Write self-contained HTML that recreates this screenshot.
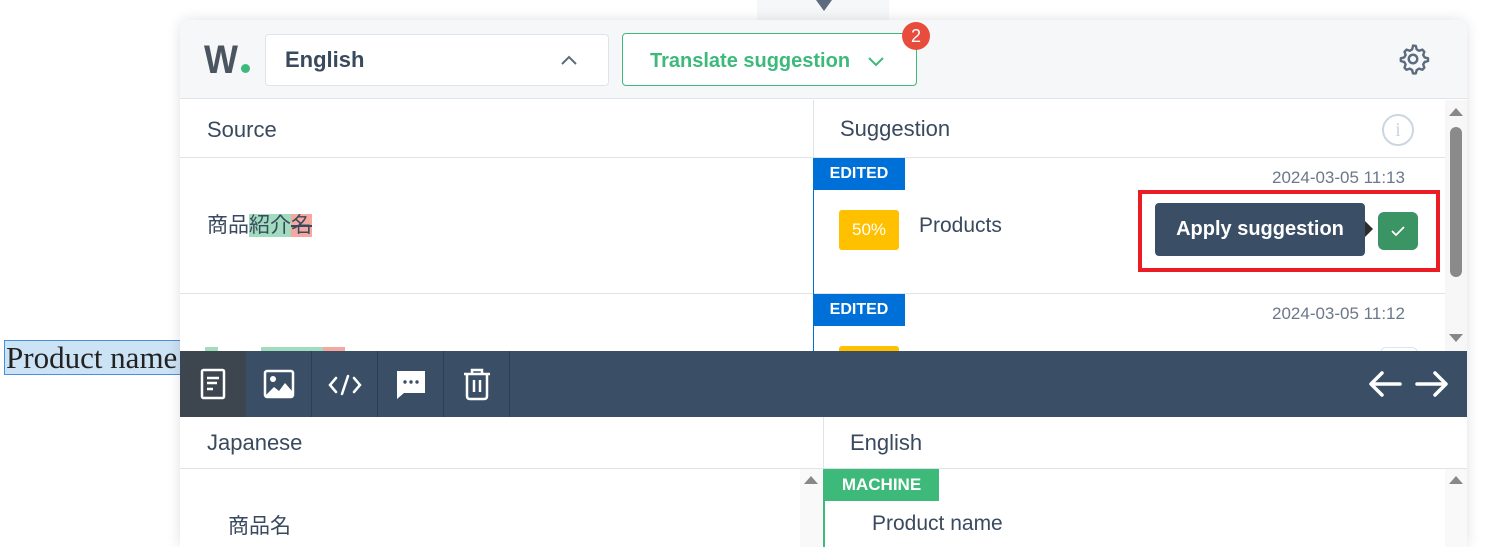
<!DOCTYPE html>
<html><head><meta charset="utf-8"><style>
*{box-sizing:border-box;margin:0;padding:0}
html,body{width:1492px;height:547px;overflow:hidden}
body{background:#fff;position:relative;font-family:"Liberation Sans","Noto Sans CJK JP",sans-serif;color:#3a4a5e}
.a{position:absolute}
.t{white-space:nowrap}
</style></head><body>
<div class="a" style="left:4px;top:340px;width:180px;height:35px;background:#cce2f5;border:1px solid #4a90e2;border-right:none;font-family:'Liberation Serif',serif;font-size:31px;color:#222;line-height:33px;padding-left:1px;overflow:hidden" ><span class="t">Product name</span></div>
<div class="a" style="left:757px;top:0;width:132px;height:22px;background:#f5f7f9"></div>
<div class="a" style="left:816px;top:0;width:0;height:0;border-left:8px solid transparent;border-right:8px solid transparent;border-top:11px solid #5c6b7d"></div>
<div class="a" style="left:180px;top:20px;width:1287px;height:527px;background:#fff;border-radius:10px 10px 0 0;box-shadow:0 0 14px rgba(0,0,0,.12);overflow:hidden">
 <div class="a" style="left:0;top:0;width:1287px;height:79px;background:#f5f7f9;border-bottom:1px solid #dfe4ea"></div>
 <div class="a t" style="left:24px;top:18px;font-size:40px;font-weight:bold;color:#4a5560;transform:scaleX(.9);transform-origin:left">W</div>
 <div class="a" style="left:61px;top:44px;width:9px;height:9px;border-radius:50%;background:#3dba7a"></div>
 <div class="a" style="left:85px;top:14px;width:344px;height:52px;background:#fff;border:1px solid #dfe4ea;border-radius:4px"></div>
 <div class="a t" style="left:105px;top:27px;font-size:22px;font-weight:bold;color:#3a4a5e">English</div>
 <svg class="a" style="left:380px;top:34px" width="18" height="12"><path d="M2 10L9 3L16 10" stroke="#5c6b7d" stroke-width="2" fill="none"/></svg>
 <div class="a" style="left:442px;top:13px;width:295px;height:53px;border:1px solid #3dba7a;border-radius:4px;background:#fff"></div>
 <div class="a t" style="left:470px;top:30px;font-size:20px;font-weight:bold;color:#3dba7a">Translate suggestion</div>
 <svg class="a" style="left:687px;top:35px" width="18" height="12"><path d="M2 3L9 10L16 3" stroke="#3dba7a" stroke-width="2" fill="none"/></svg>
 <div class="a t" style="left:722px;top:2px;width:28px;height:28px;border-radius:50%;background:#e84c3d;color:#fff;font-size:18px;text-align:center;line-height:28px">2</div>
 <svg class="a" style="left:1216px;top:22px" width="34" height="34" viewBox="0 0 24 24"><path d="M12 2.5l2 .3.6 2.4 1.7 1 2.3-.8 1.4 1.5-.8 2.3 1 1.7 2.4.6v2l-2.4.6-1 1.7.8 2.300-1.4 1.5-2.3-.8-1.7 1-.6 2.4h-2l-.6-2.4-1.7-1-2.3.8-1.4-1.5.8-2.3-1-1.7-2.4-.6v-2l2.4-.6 1-1.7-.8-2.3 1.4-1.5 2.3.8 1.7-1 .6-2.4z" fill="none" stroke="#5c6b7d" stroke-width="1.7" stroke-linejoin="round"/><circle cx="12" cy="12" r="3" fill="none" stroke="#5c6b7d" stroke-width="1.7"/></svg>
 <div class="a" style="left:0;top:137px;width:1265px;height:1px;background:#dfe4ea"></div>
 <div class="a" style="left:633px;top:80px;width:1px;height:251px;background:#dfe4ea"></div>
 <div class="a t" style="left:27px;top:97px;font-size:22px">Source</div>
 <div class="a t" style="left:660px;top:96px;font-size:22px">Suggestion</div>
 <div class="a" style="left:1202px;top:94px;width:32px;height:32px;border:2px solid #ccd6e0;border-radius:50%;color:#ccd6e0;text-align:center;font-size:20px;line-height:28px;font-family:'Liberation Serif',serif">i</div>
 <div class="a" style="left:1265px;top:80px;width:22px;height:251px;background:#f7f7f7"></div>
 <div class="a" style="left:1269px;top:88px;border-left:7px solid transparent;border-right:7px solid transparent;border-bottom:8px solid #888"></div>
 <div class="a" style="left:1270px;top:107px;width:12px;height:150px;border-radius:6px;background:#8a8a8a"></div>
 <div class="a" style="left:1269px;top:314px;border-left:7px solid transparent;border-right:7px solid transparent;border-top:8px solid #888"></div>
 <div class="a t" style="left:27px;top:191px;font-size:21px;line-height:29px"><span>商品</span><span style="background:#a0dcbd">紹介</span><span style="background:#f4a8a0;text-decoration:line-through">名</span></div>
 <div class="a" style="left:0;top:273px;width:633px;height:1px;background:#dfe4ea"></div>
 <div class="a" style="left:634px;top:273px;width:631px;height:1px;background:#dfe4ea"></div>
 <div class="a" style="left:633px;top:138px;width:1px;height:193px;background:#0070d9"></div>
 <div class="a t" style="left:633px;top:138px;width:92px;height:32px;background:#0070d9;color:#fff;font-weight:bold;font-size:16px;line-height:32px;text-align:center">EDITED</div>
 <div class="a t" style="left:633px;top:274px;width:92px;height:32px;background:#0070d9;color:#fff;font-weight:bold;font-size:16px;line-height:32px;text-align:center">EDITED</div>
 <div class="a t" style="left:1092px;top:148px;font-size:17px;color:#6b7889">2024-03-05 11:13</div>
 <div class="a t" style="left:1092px;top:284px;font-size:17px;color:#6b7889">2024-03-05 11:12</div>
 <div class="a t" style="left:659px;top:190px;width:60px;height:40px;background:#ffc000;border-radius:3px;color:#fff;font-size:17px;line-height:40px;text-align:center">50%</div>
 <div class="a" style="left:659px;top:326px;width:60px;height:10px;background:#ffc000;border-radius:3px"></div>
 <div class="a t" style="left:739px;top:194px;font-size:21px">Products</div>
 <div class="a" style="left:25px;top:327px;width:13px;height:4px;background:#a0dcbd"></div>
 <div class="a" style="left:81px;top:327px;width:62px;height:4px;background:#a0dcbd"></div>
 <div class="a" style="left:143px;top:327px;width:22px;height:4px;background:#f4a8a0"></div>
 <div class="a" style="left:958px;top:170px;width:302px;height:82px;border:4px solid #ec1c24"></div>
 <div class="a t" style="left:975px;top:183px;width:210px;height:53px;background:#3a4f66;border-radius:4px;color:#fff;font-weight:bold;font-size:20px;line-height:53px;text-align:center">Apply suggestion</div>
 <div class="a" style="left:1185px;top:201px;border-top:8px solid transparent;border-bottom:8px solid transparent;border-left:8px solid #2d2d2d"></div>
 <div class="a" style="left:1198px;top:192px;width:40px;height:38px;background:#3a9463;border-radius:6px"></div>
 <svg class="a" style="left:1210px;top:204px" width="16" height="14"><path d="M2 7L6 11L14 3" stroke="#fff" stroke-width="1.8" fill="none"/></svg>
 <div class="a" style="left:1200px;top:327px;width:38px;height:10px;border:1px solid #dfe4ea;border-radius:6px 6px 0 0"></div>
 <div class="a" style="left:0;top:331px;width:1287px;height:66px;background:#3a4f66"></div>
 <div class="a" style="left:0;top:331px;width:66px;height:66px;background:#3d464f"></div>
 <div class="a" style="left:131px;top:331px;width:1px;height:66px;background:#2f3e4f"></div>
 <div class="a" style="left:197px;top:331px;width:1px;height:66px;background:#2f3e4f"></div>
 <div class="a" style="left:263px;top:331px;width:1px;height:66px;background:#2f3e4f"></div>
 <div class="a" style="left:329px;top:331px;width:1px;height:66px;background:#2f3e4f"></div>
 <svg class="a" style="left:20px;top:348px" width="26" height="32"><rect x="2" y="2" width="22" height="28" rx="1.5" fill="none" stroke="#fff" stroke-width="2.5"/><path d="M7 10h12M7 15h10M7 21h6" stroke="#fff" stroke-width="2.5"/></svg>
 <svg class="a" style="left:83px;top:349px" width="32" height="30"><rect x="2" y="2" width="28" height="26" rx="2" fill="none" stroke="#fff" stroke-width="2.5"/><circle cx="10" cy="10" r="3" fill="#fff"/><path d="M3 26L11 18L16 22L22 14L29 22V27H3z" fill="#fff"/></svg>
 <svg class="a" style="left:147px;top:353px" width="36" height="24"><path d="M9 5L3 12L9 19M27 5L33 12L27 19M21 3L15 21" stroke="#fff" stroke-width="2.5" fill="none" stroke-linecap="round"/></svg>
 <svg class="a" style="left:215px;top:349px" width="32" height="32"><path d="M2 2H30V24H9L2 30Z" fill="#fff"/><circle cx="10" cy="13" r="1.7" fill="#3a4f66"/><circle cx="16" cy="13" r="1.7" fill="#3a4f66"/><circle cx="22" cy="13" r="1.7" fill="#3a4f66"/></svg>
 <svg class="a" style="left:282px;top:347px" width="30" height="34"><path d="M2 7H28M10 7V3H20V7M5 7V29Q5 32 8 32H22Q25 32 25 29V7M12 13V25M18 13V25" stroke="#fff" stroke-width="2.5" fill="none"/></svg>
 <svg class="a" style="left:1188px;top:350px" width="36" height="28"><path d="M32 14H4M14 3L3 14L14 25" stroke="#fff" stroke-width="3.5" fill="none" stroke-linecap="round" stroke-linejoin="round"/></svg>
 <svg class="a" style="left:1234px;top:350px" width="36" height="28"><path d="M3 14H31M21 3L32 14L21 25" stroke="#fff" stroke-width="3.5" fill="none" stroke-linecap="round" stroke-linejoin="round"/></svg>
 <div class="a" style="left:0;top:448px;width:1287px;height:1px;background:#dfe4ea"></div>
 <div class="a" style="left:643px;top:397px;width:1px;height:150px;background:#dfe4ea"></div>
 <div class="a t" style="left:27px;top:410px;font-size:22px">Japanese</div>
 <div class="a t" style="left:670px;top:410px;font-size:22px">English</div>
 <div class="a" style="left:620px;top:449px;width:22px;height:100px;background:#f9f9f9"></div>
 <div class="a" style="left:624px;top:456px;border-left:7px solid transparent;border-right:7px solid transparent;border-bottom:8px solid #888"></div>
 <div class="a" style="left:1265px;top:449px;width:22px;height:100px;background:#f9f9f9"></div>
 <div class="a" style="left:1269px;top:456px;border-left:7px solid transparent;border-right:7px solid transparent;border-bottom:8px solid #888"></div>
 <div class="a t" style="left:48px;top:490px;font-size:21px">商品名</div>
 <div class="a" style="left:643px;top:449px;width:2px;height:100px;background:#3dba7a"></div>
 <div class="a t" style="left:644px;top:449px;width:115px;height:32px;background:#3dba7a;color:#fff;font-weight:bold;font-size:17px;line-height:32px;text-align:center">MACHINE</div>
 <div class="a t" style="left:692px;top:492px;font-size:21px">Product name</div>
</div>
</body></html>
